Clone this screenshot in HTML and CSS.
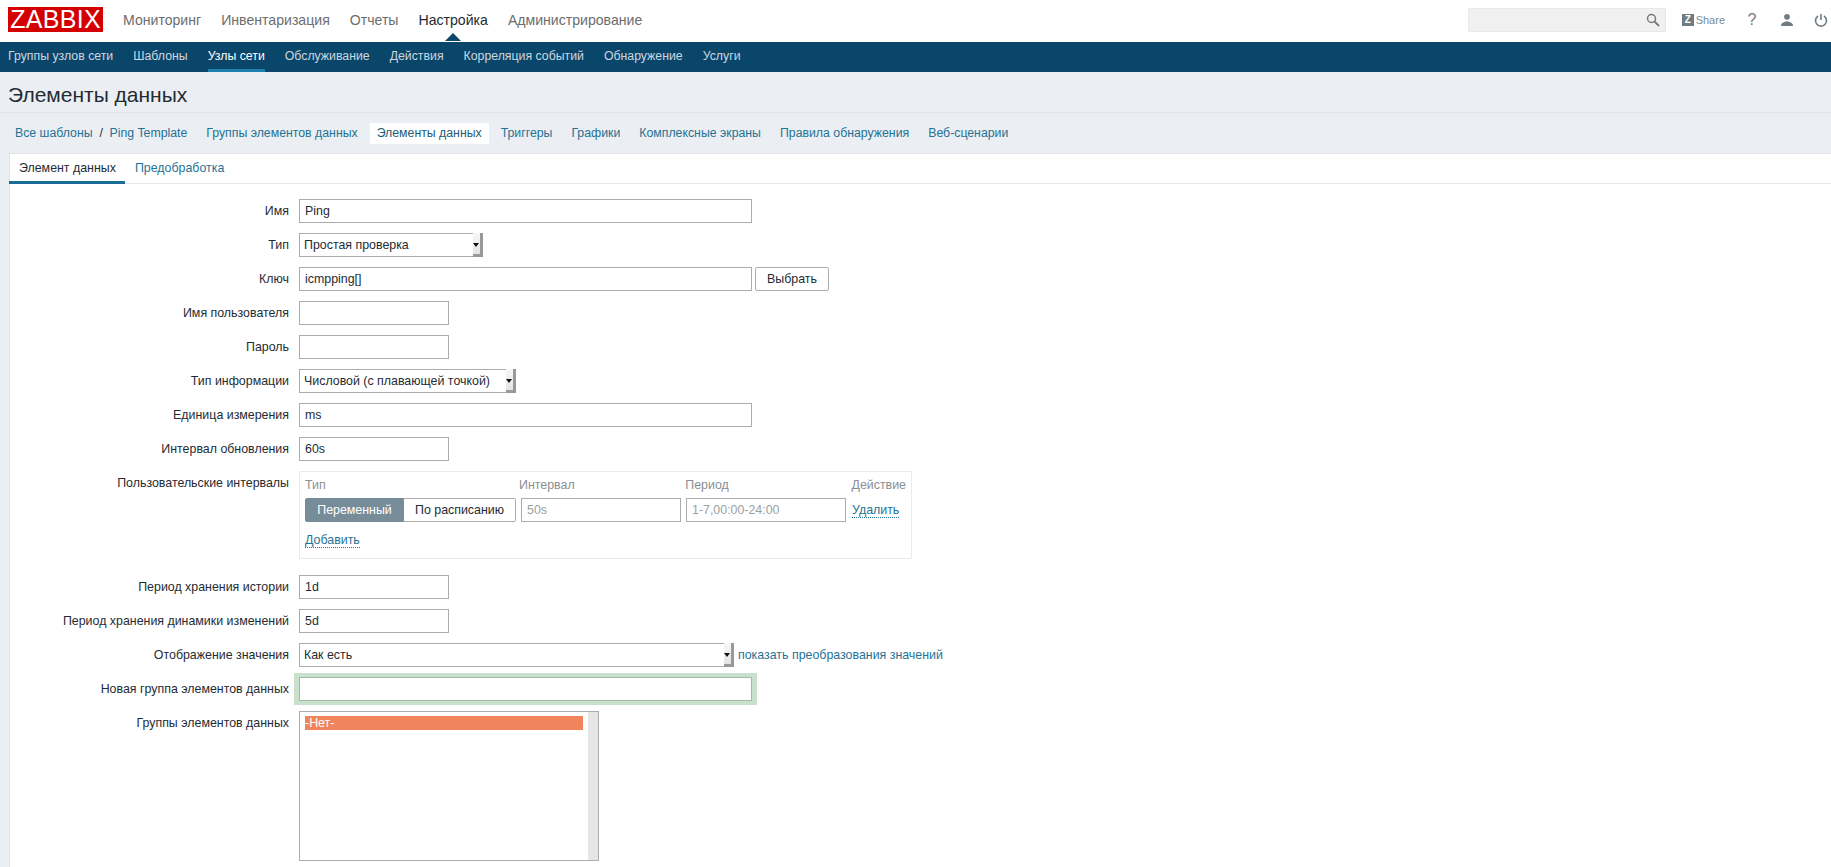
FILE: index.html
```html
<!DOCTYPE html>
<html lang="ru">
<head>
<meta charset="utf-8">
<title>Элементы данных</title>
<link rel="stylesheet" href="styles.css">
</head>
<body>
<header class="top">
  <div class="logo">ZABBIX</div>
  <nav class="menu">
    <a>Мониторинг</a><a>Инвентаризация</a><a>Отчеты</a><a class="on">Настройка</a><a>Администрирование</a>
  </nav>
  <div class="tools">
    <div class="search">
      <svg width="14" height="14" viewBox="0 0 14 14"><circle cx="5.5" cy="5.500" r="4" fill="none" stroke="#7a7a7a" stroke-width="1.5"/><path d="M8.500 8.500L13 13" stroke="#7a7a7a" stroke-width="2"/></svg>
    </div>
    <div class="share"><span class="z">Z</span>Share</div>
    <span class="help">?</span>
    <svg class="ico-user" width="14" height="14" viewBox="0 0 14 14"><circle cx="7" cy="3.800" r="2.900" fill="#6f7c84"/><path d="M1 13c0-3 3-4.500 6-4.500s6 1.500 6 4.500z" fill="#6f7c84"/></svg>
    <svg class="ico-power" width="14" height="14" viewBox="0 0 14 14"><path d="M4 3a5.500 5.500 0 1 0 6 0" fill="none" stroke="#6f7c84" stroke-width="1.600"/><path d="M7 1v6" stroke="#6f7c84" stroke-width="1.600"/></svg>
  </div>
</header>
<nav class="sub">
  <a>Группы узлов сети</a><a>Шаблоны</a><a class="on">Узлы сети</a><a>Обслуживание</a><a>Действия</a><a>Корреляция событий</a><a>Обнаружение</a><a>Услуги</a>
</nav>
<h1 class="title">Элементы данных</h1>
<nav class="crumbs">
  <a class="c1">Все шаблоны</a><span class="sl">/</span><a class="c2">Ping Template</a>
  <a>Группы элементов данных</a><a class="cur">Элементы данных</a><a>Триггеры</a><a>Графики</a><a>Комплексные экраны</a><a>Правила обнаружения</a><a>Веб-сценарии</a>
</nav>
<main class="panel">
  <div class="tabs"><a class="tab active">Элемент данных</a><a class="tab">Предобработка</a></div>
  <div class="form">
    <div class="row"><div class="lbl">Имя</div><div class="fld"><div class="inp wide">Ping</div></div></div>
    <div class="row"><div class="lbl">Тип</div><div class="fld"><div class="sel s1">Простая проверка<i class="arr"></i></div></div></div>
    <div class="row"><div class="lbl">Ключ</div><div class="fld"><div class="inp wide">icmpping[]</div><div class="btn">Выбрать</div></div></div>
    <div class="row"><div class="lbl">Имя пользователя</div><div class="fld"><div class="inp small"></div></div></div>
    <div class="row"><div class="lbl">Пароль</div><div class="fld"><div class="inp small"></div></div></div>
    <div class="row"><div class="lbl">Тип информации</div><div class="fld"><div class="sel s2">Числовой (с плавающей точкой)<i class="arr"></i></div></div></div>
    <div class="row"><div class="lbl">Единица измерения</div><div class="fld"><div class="inp wide">ms</div></div></div>
    <div class="row"><div class="lbl">Интервал обновления</div><div class="fld"><div class="inp small">60s</div></div></div>
    <div class="row tall"><div class="lbl">Пользовательские интервалы</div><div class="fld">
      <div class="ibox">
        <div class="ihead"><span class="h1">Тип</span><span class="h2">Интервал</span><span class="h3">Период</span><span>Действие</span></div>
        <div class="irow">
          <div class="seg"><span class="seg-on">Переменный</span><span class="seg-off">По расписанию</span></div>
          <div class="inp ph w-int">50s</div><div class="inp ph w-per">1-7,00:00-24:00</div><a class="dot">Удалить</a>
        </div>
        <div class="iadd"><a class="dot">Добавить</a></div>
      </div>
    </div></div>
    <div class="row"><div class="lbl">Период хранения истории</div><div class="fld"><div class="inp small">1d</div></div></div>
    <div class="row"><div class="lbl">Период хранения динамики изменений</div><div class="fld"><div class="inp small">5d</div></div></div>
    <div class="row"><div class="lbl">Отображение значения</div><div class="fld"><div class="sel s3">Как есть<i class="arr"></i></div><a class="vm">показать преобразования значений</a></div></div>
    <div class="row"><div class="lbl">Новая группа элементов данных</div><div class="fld"><div class="inp wide glow"></div></div></div>
    <div class="row"><div class="lbl">Группы элементов данных</div><div class="fld">
      <div class="list"><div class="list-body"><div class="opt">-Нет-</div></div><div class="list-bar"></div></div>
    </div></div>
  </div>
</main>
</body>
</html>
```
FILE: styles.css
```css
* { box-sizing: border-box; }
html, body { margin: 0; height: 867px; overflow: hidden; }
body { background: #ebeef2; color: #1f2c33; font: 12.4px/14px "Liberation Sans", Arial, sans-serif; }
a { color: #1f7396; }

.top { height: 42px; background: #fff; display: flex; align-items: center; padding: 0 0 0 8px; }
.logo { width: 95px; height: 25px; margin-top: -3px; background: #d40000; color: #fff; font-size: 25px; line-height: 25px; text-align: center; letter-spacing: .3px; }
.menu { display: flex; gap: 20px; margin-left: 20px; font-size: 14.1px; margin-top: -2px; }
.menu a { color: #6d6d6d; position: relative; }
.menu a.on { color: #1f2c33; }
.menu a.on::after { content: ""; position: absolute; left: 50%; bottom: -14px; margin-left: -8px; border: 8px solid transparent; border-top: 0; border-bottom-color: #0a466a; }
.tools { margin-left: auto; display: flex; align-items: center; height: 24px; margin-top: -2px; }
.search { width: 198px; height: 24px; background: #f0f0f0; border: 1px solid #e8e8e8; display: flex; align-items: center; justify-content: flex-end; padding-right: 5px; }
.share { display: flex; align-items: center; margin-left: 16px; color: #768d99; font-size: 11px; width: 43px; }
.z { width: 12px; height: 12px; margin-right: 2px; background: #6f7c84; color: #fff; font-weight: bold; font-size: 10px; line-height: 12px; text-align: center; }
.help { margin-left: 22px; color: #6f7c84; font-size: 16px; width: 10px; text-align: center; }
.ico-user { margin-left: 23px; }
.ico-power { margin-left: 20px; margin-right: 3px; }

.sub { height: 30px; background: #0a466a; display: flex; gap: 20px; padding-left: 8px; font-size: 12.3px; }
.sub a { color: #ccd8e0; height: 30px; line-height: 29px; }
.sub a.on { color: #fff; border-bottom: 3px solid #1f80b0; }

.title { margin: 0; height: 41px; padding-left: 8px; font-weight: normal; font-size: 21px; line-height: 46px; color: #1f2c33; border-bottom: 1px solid #e0e4e8; }

.crumbs { height: 40px; display: flex; align-items: flex-start; padding: 10px 0 0 7px; font-size: 12.3px; }
.crumbs a { padding: 0 7px; height: 21px; line-height: 20px; margin-right: 5px; }
.crumbs a.c1 { margin-right: 0; padding: 0 0 0 8px; }
.crumbs a.c2 { padding-left: 0; }
.sl { color: #1f2c33; line-height: 20px; width: 17px; text-align: center; }
.crumbs a.cur { background: #fff; color: #1f5c73; }

.panel { margin-left: 9px; background: #fff; border-left: 1px solid #dfe4e7; border-top: 1px solid #dfe4e7; height: 720px; }
.tabs { height: 30px; display: flex; border-bottom: 1px solid #e4e7ea; }
.tab { padding: 0 10px; height: 30px; line-height: 29px; }
.tab.active { color: #1f2c33; border-bottom: 3px solid #1a6d96; margin-left: -1px; padding: 0 9px 0 10px; }
.form { padding-top: 15px; }
.row { display: flex; min-height: 24px; margin-bottom: 10px; }
.row.tall { margin-bottom: 16px; }
.lbl { width: 279px; text-align: right; line-height: 24px; white-space: nowrap; flex: none; }
.fld { margin-left: 10px; display: flex; align-items: flex-start; }

.inp { height: 24px; border: 1px solid #acacac; padding: 0 5px; line-height: 22px; background: #fff; }
.wide { width: 453px; }
.small { width: 150px; }
.ph { color: #9aa0a4; }
.glow { border-color: #9fbda5; box-shadow: -1px 0 0 4px #c8e0cc, 1px 0 0 4px #c8e0cc; }
.btn { height: 24px; width: 74px; margin-left: 3px; border: 1px solid #acacac; border-radius: 2px; text-align: center; line-height: 22px; }

.sel { height: 24px; border: 1px solid #acacac; padding: 0 4px; line-height: 22px; position: relative; background: #fff; }
.s1 { width: 184px; }
.s2 { width: 217px; }
.s3 { width: 435px; }
.arr { position: absolute; right: -1px; top: -1px; bottom: -1px; width: 10px; background: linear-gradient(#f8f8f8, #e4e4e4); border-right: 3px solid #999; border-bottom: 3px solid #999; }
.arr::after { content: ""; position: absolute; left: 0; top: 10px; border: 3px solid transparent; border-bottom: 0; border-top: 4px solid #111; }

.ibox { width: 613px; height: 88px; border: 1px solid #ebebeb; padding: 5px; }
.ihead { display: flex; color: #8a8f93; height: 21px; line-height: 16px; }
.h1 { width: 215px; }
.h2 { width: 167px; }
.h3 { width: 167px; }
.irow { display: flex; align-items: center; height: 24px; }
.seg { display: flex; width: 211px; height: 24px; line-height: 22px; }
.seg-on { width: 99px; background: #768d99; color: #fff; text-align: center; border: 1px solid #768d99; border-radius: 2px 0 0 2px; }
.seg-off { width: 112px; border: 1px solid #acacac; border-left: 0; border-radius: 0 2px 2px 0; text-align: center; }
.w-int { width: 160px; margin-left: 5px; }
.w-per { width: 160px; margin-left: 5px; margin-right: 6px; }
.dot { border-bottom: 1px dotted #1f7396; line-height: 14px; }
.iadd { margin-top: 11px; }

.vm { margin-left: 4px; line-height: 24px; }
.list { width: 300px; height: 150px; border: 1px solid #acacac; display: flex; }
.list-body { flex: 1; padding: 4px 5px; }
.opt { height: 14px; background: #f0855d; color: #fff; line-height: 14px; width: 278px; }
.list-bar { width: 10px; background: #e6e6e6; }
```
